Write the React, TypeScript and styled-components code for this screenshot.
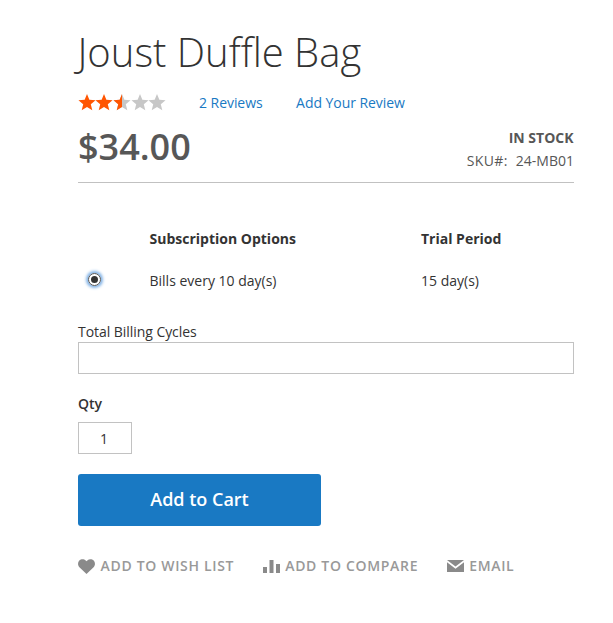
import React from "react";
import styled, { createGlobalStyle } from "styled-components";

const GlobalStyle = createGlobalStyle`
    html, body {
        margin: 0;
        padding: 0;
        background: #fff;
    }
    body {
        font-family: "Open Sans", sans-serif;
        color: #333;
        font-size: 14px;
    }
`;

const STAR_PATH = "M9 0L11.35 5.76 17.56 6.22 12.8 10.24 14.29 16.28 9 13 3.71 16.28 5.2 10.24 .44 6.22 6.65 5.76z";

const Star: React.FC<{ fill: string }> = ({ fill }) => (
    <svg width="18" height="17" viewBox="0 0 18 17">
        <path d={STAR_PATH} fill={fill} />
    </svg>
);

const HalfStar = () => (
    <svg width="18" height="17" viewBox="0 0 18 17">
        <path d={STAR_PATH} fill="#c7c7c7" />
        <path d="M9 0V13L3.71 16.28 5.2 10.24 .44 6.22 6.65 5.76z" fill="#ff5501" />
    </svg>
);

const HeartIcon = () => (
    <svg width="17" height="15" viewBox="0 0 17 15">
        <path d="M8.5 15L1.4 8.2C-.4 6.4-.4 3.4 1.300 1.500 3 -.3 6 -.3 7.700 1.400l.8.8.8-.8C11 -.3 14 -.3 15.700 1.500c1.700 1.900 1.700 4.900-.1 6.700z" fill="#8a8a8a" />
    </svg>
);

const CompareIcon = () => (
    <svg width="17" height="13" viewBox="0 0 17 13">
        <path d="M0 7h4v6H0zM6.500 0h4v13h-4zM13 4h4v9h-4z" fill="#8a8a8a" />
    </svg>
);

const MailIcon = () => (
    <svg width="17" height="12" viewBox="0 0 17 12">
        <path d="M0 0h17L8.500 6.500zM0 2.200l8.500 6.500L17 2.200V12H0z" fill="#8a8a8a" />
    </svg>
);

export default function App() {
    return (
        <Page>
            <GlobalStyle />
            <Title>Joust Duffle Bag</Title>
            <ReviewsRow>
                <Stars>
                    <Star fill="#ff5501" />
                    <Star fill="#ff5501" />
                    <HalfStar />
                    <Star fill="#c7c7c7" />
                    <Star fill="#c7c7c7" />
                </Stars>
                <ReviewLink>2 Reviews</ReviewLink>
                <ReviewLink>Add Your Review</ReviewLink>
            </ReviewsRow>
            <PriceRow>
                <Price>$34.00</Price>
                <StockInfo>
                    <Stock>IN STOCK</Stock>
                    <Sku>
                        <SkuLabel>SKU#:</SkuLabel>24-MB01
                    </Sku>
                </StockInfo>
            </PriceRow>
            <OptionsTable>
                <HeaderCell />
                <HeaderCell>Subscription Options</HeaderCell>
                <HeaderCell>Trial Period</HeaderCell>
                <RadioCell>
                    <Radio />
                </RadioCell>
                <BodyCell>Bills every 10 day(s)</BodyCell>
                <BodyCell>15 day(s)</BodyCell>
            </OptionsTable>
            <CyclesLabel>Total Billing Cycles</CyclesLabel>
            <CyclesInput type="text" />
            <QtyLabel>Qty</QtyLabel>
            <QtyInput type="text" defaultValue="1" />
            <CartButton>Add to Cart</CartButton>
            <Actions>
                <Action>
                    <HeartIcon />
                    ADD TO WISH LIST
                </Action>
                <Action>
                    <CompareIcon />
                    ADD TO COMPARE
                </Action>
                <Action>
                    <MailIcon />
                    EMAIL
                </Action>
            </Actions>
        </Page>
    );
}

const Page = styled.div`
    width: 496px;
    padding-left: 78px;
    height: 623px;
    overflow: hidden;
`;

const Title = styled.h1`
    margin: 0;
    padding-top: 26px;
    font-size: 40px;
    line-height: 52px;
    font-weight: 300;
    color: #333;
    margin-left: -0.5px;
`;

const ReviewsRow = styled.div`
    display: flex;
    align-items: center;
    height: 20px;
    margin-top: 14px;
`;

const Stars = styled.div`
    display: flex;
    width: 121.5px;
    height: 17px;
    margin-left: -0.5px;
    padding-top: 1px;
    svg {
        flex: none;
        margin-right: -0.3px;
    }
`;

const ReviewLink = styled.a`
    color: #1979c3;
    font-size: 14px;
    margin-right: 33.5px;
    letter-spacing: -0.05px;
`;

const PriceRow = styled.div`
    display: flex;
    justify-content: space-between;
    height: 58px;
    margin-top: 12px;
    border-bottom: 1px solid #c1c1c1;
`;

const Price = styled.div`
    font-size: 36px;
    line-height: 46px;
    font-weight: 600;
    color: #575757;
`;

const StockInfo = styled.div`
    text-align: right;
    padding-top: 4px;
`;

const Stock = styled.div`
    font-weight: 700;
    font-size: 14px;
    line-height: 20px;
    color: #575757;
    margin-right: 0.5px;
`;

const Sku = styled.div`
    font-size: 14px;
    line-height: 20px;
    margin-top: 3px;
    color: #575757;
`;

const SkuLabel = styled.span`
    letter-spacing: 0.4px;
    margin-right: 8px;
`;

const OptionsTable = styled.div`
    display: grid;
    grid-template-columns: 71.5px 271.5px 1fr;
    grid-template-rows: 42px 42px;
    margin-top: 34px;
`;

const HeaderCell = styled.div`
    font-weight: 700;
    font-size: 14px;
    display: flex;
    align-items: center;
`;

const BodyCell = styled.div`
    font-size: 14px;
    display: flex;
    align-items: center;
`;

const RadioCell = styled.div`
    display: flex;
    align-items: center;
    padding-left: 10px;
`;

const Radio = styled.span`
    box-sizing: border-box;
    width: 13px;
    height: 13px;
    border-radius: 50%;
    border: 3px solid #fff;
    outline: 1px solid #555;
    outline-offset: -1px;
    background: #333;
    box-shadow: 0 0 3px 2px #7fb1e6;
    margin-top: -2px;
`;

const CyclesLabel = styled.div`
    margin-top: 21px;
    line-height: 20px;
    font-size: 14px;
    letter-spacing: -0.05px;
`;

const CyclesInput = styled.input`
    display: block;
    box-sizing: border-box;
    width: 100%;
    height: 32px;
    border: 1px solid #c2c2c2;
    background: #fff;
    padding: 0 9px;
    margin: 0;
    outline: none;
`;

const QtyLabel = styled.div`
    margin-top: 20px;
    font-weight: 600;
    font-size: 14px;
    line-height: 20px;
`;

const QtyInput = styled.input`
    display: block;
    box-sizing: border-box;
    width: 54px;
    height: 32px;
    margin-top: 8px;
    border: 1px solid #c2c2c2;
    text-align: center;
    font-family: "Open Sans", sans-serif;
    font-size: 14px;
    color: #333;
    outline: none;
    padding: 0 2px 0 0;
`;

const CartButton = styled.button`
    display: block;
    width: 243px;
    height: 52px;
    margin-top: 20px;
    border: 0;
    border-radius: 3px;
    background: #1979c3;
    color: #fff;
    font-family: "Open Sans", sans-serif;
    font-size: 18px;
    font-weight: 600;
    padding: 0 0 2px;
`;

const Actions = styled.div`
    display: flex;
    align-items: center;
    gap: 28.5px;
    margin-top: 30px;
`;

const Action = styled.a`
    display: flex;
    align-items: center;
    gap: 5.5px;
    color: #999;
    font-size: 14px;
    font-weight: 600;
    letter-spacing: 0.68px;
    line-height: 20px;
`;
